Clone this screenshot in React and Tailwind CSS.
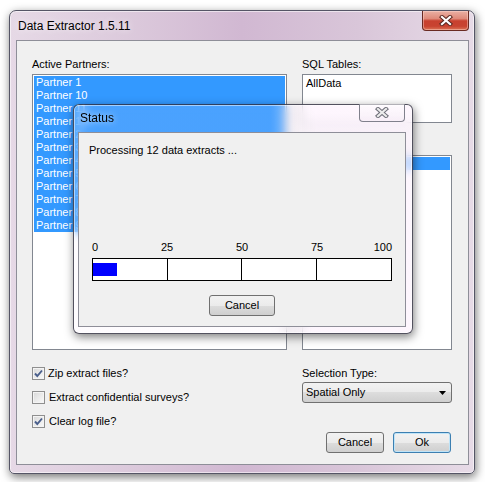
import React from "react";

const CloseGlyph = ({ fill, outline }) => (
  <svg width="14" height="11" viewBox="0 0 14 11">
    <path d="M3 2 L11 9 M11 2 L3 9" stroke={outline} strokeWidth="4.2" strokeLinecap="square" fill="none" />
    <path d="M3 2 L11 9 M11 2 L3 9" stroke={fill} strokeWidth="2.2" strokeLinecap="square" fill="none" />
  </svg>
);

const Check = ({ checked }) => (
  <div className="w-[13px] h-[13px] border border-[#8f8f8f] bg-[linear-gradient(135deg,#d8d8d8,#fbfbfb)] shadow-[inset_0_0_0_1px_#f4f4f4] flex items-center justify-center shrink-0">
    {checked && (
      <svg width="11" height="11" viewBox="0 0 11 11">
        <path d="M2 5.5 L4.3 8 L9 2.5" stroke="#4a5f8c" strokeWidth="1.9" fill="none" />
      </svg>
    )}
  </div>
);

const btn =
  "h-[21px] rounded-[3px] border bg-[linear-gradient(#f2f2f2_0%,#ebebeb_50%,#dddddd_50%,#cfcfcf_100%)] text-[11px] text-black flex items-center justify-center";

const partners = [
  "Partner 1",
  "Partner 10",
  "Partner 11",
  "Partner 12",
  "Partner 2",
  "Partner 3",
  "Partner 4",
  "Partner 5",
  "Partner 6",
  "Partner 7",
  "Partner 8",
  "Partner 9",
];

export default function App() {
  return (
    <div className="w-[485px] h-[482px] bg-white relative overflow-hidden font-['Liberation_Sans',Arial,sans-serif] text-[11px] leading-[13px] text-black">
      <div className="pt-[10px] pl-[9px]">
        {/* Main window */}
        <div className="w-[466px] h-[464px] rounded-t-[7px] rounded-b-[5px] border border-[#555566] bg-[linear-gradient(90deg,#e6d9e6_0%,#dccadc_25%,#d1b8d2_50%,#d9c6d9_75%,#e7dbe7_100%)] shadow-[1px_3px_10px_rgba(0,0,0,0.55),inset_0_0_0_1px_rgba(255,255,255,0.55)] flex flex-col">
          {/* Title bar */}
          <div className="h-[29px] flex justify-between items-start pl-[8px] pr-[5px] shrink-0">
            <div className="mt-[8px] text-[12px] leading-[15px] text-black [text-shadow:0_0_6px_rgba(255,255,255,0.9)]">
              Data Extractor 1.5.11
            </div>
            <div className="w-[47px] h-[20px] rounded-b-[4px] border border-t-0 border-[#6a2a22] bg-[linear-gradient(#eab0a4_0%,#df8a7a_40%,#c8412f_52%,#c84330_80%,#dc7456_100%)] shadow-[inset_0_0_0_1px_rgba(255,220,210,0.45)] flex items-center justify-center">
              <CloseGlyph fill="#ffffff" outline="#5a2820" />
            </div>
          </div>
          {/* Client */}
          <div className="ml-[6px] mr-[5px] h-[425px] border border-[#8e8e98] bg-[#f0f0f0] flex pl-[15px] pr-[16px] pt-[17px]">
            {/* Left column */}
            <div className="w-[255px] flex flex-col">
              <div className="h-[13px] mb-[3px]">Active Partners:</div>
              <div className="h-[276px] border border-[#828790] bg-white p-[1px]">
                {partners.map((p) => (
                  <div key={p} className="h-[13px] bg-[#3399ff] text-white pl-[2px]">
                    {p}
                  </div>
                ))}
              </div>
              <div className="mt-[17px] flex flex-col gap-[11px]">
                <div className="flex items-center gap-[3px] h-[13px]">
                  <Check checked />
                  <span>Zip extract files?</span>
                </div>
                <div className="flex items-center gap-[4px] h-[13px]">
                  <Check />
                  <span>Extract confidential surveys?</span>
                </div>
                <div className="flex items-center gap-[4px] h-[13px]">
                  <Check checked />
                  <span>Clear log file?</span>
                </div>
              </div>
            </div>
            {/* Right column */}
            <div className="w-[150px] ml-[15px] flex flex-col">
              <div className="h-[13px] mb-[3px]">SQL Tables:</div>
              <div className="h-[49px] border border-[#828790] bg-white pt-[2px] pl-[3px]">AllData</div>
              <div className="h-[13px] mt-[16px] mb-[3px]">Fields:</div>
              <div className="h-[195px] border border-[#828790] bg-white p-[1px]">
                <div className="h-[13px] bg-[#3399ff] text-white pl-[2px]">All Fields</div>
              </div>
              <div className="h-[13px] mt-[17px] mb-[2px]">Selection Type:</div>
              <div className="h-[21px] rounded-[3px] border border-[#707070] bg-[linear-gradient(#f2f2f2_0%,#ebebeb_50%,#dddddd_50%,#cfcfcf_100%)] flex items-center justify-between pl-[3px] pr-[5px]">
                <span>Spatial Only</span>
                <svg width="7" height="4" viewBox="0 0 7 4">
                  <path d="M0 0 H7 L3.5 4 Z" fill="#000" />
                </svg>
              </div>
              <div className="mt-[29px] flex justify-end gap-[9px] pr-[1px]">
                <div className={`${btn} w-[58px] border-[#707070]`}>Cancel</div>
                <div className={`${btn} w-[58px] border-[#3c7fb1] shadow-[inset_0_0_0_1px_#bfe4f8]`}>Ok</div>
              </div>
            </div>
          </div>
        </div>
      </div>

      {/* Status dialog (overlay) */}
      <div className="absolute left-[73px] top-[104px] w-[340px] h-[230px] rounded-[6px] border border-[rgba(40,40,55,0.8)] bg-[linear-gradient(90deg,rgba(248,228,248,0.12)_0%,rgba(248,228,248,0.12)_58%,rgba(253,242,253,0.7)_72%,rgba(253,242,253,0.7)_100%)] backdrop-blur-[5px] shadow-[1px_3px_10px_rgba(0,0,0,0.5),inset_0_0_0_1px_rgba(255,255,255,0.5)] flex flex-col">
        <div className="h-[27px] flex justify-between items-start pl-[6px] pr-[7px] shrink-0">
          <div className="mt-[6px] text-[12px] leading-[15px] text-black [text-shadow:0_0_6px_rgba(255,255,255,0.8)]">
            Status
          </div>
          <div className="-mt-[1px] w-[46px] h-[18px] rounded-b-[4px] border border-t-0 border-[#80808c] bg-[linear-gradient(rgba(255,255,255,0.55),rgba(245,235,245,0.6))] flex items-center justify-center">
            <CloseGlyph fill="#ececec" outline="#6e6e78" />
          </div>
        </div>
        <div className="ml-[4px] w-[328px] h-[195px] border border-[#8e8e98] bg-[#f0f0f0] flex flex-col pt-[11px]">
          <div className="pl-[10px] h-[13px]">Processing 12 data extracts ...</div>
          <div className="ml-[13px] w-[300px] mt-[84px]">
            <div className="relative h-[13px] mb-[4px]">
              <span className="absolute left-0 top-0">0</span>
              <span className="absolute left-[75px] top-0 -translate-x-1/2">25</span>
              <span className="absolute left-[150px] top-0 -translate-x-1/2">50</span>
              <span className="absolute left-[225px] top-0 -translate-x-1/2">75</span>
              <span className="absolute right-0 top-0">100</span>
            </div>
            <div className="h-[23px] border border-black bg-white grid grid-cols-4">
              <div className="border-r border-black flex items-center">
                <div className="w-[24px] h-[13px] bg-[#0000ff]" />
              </div>
              <div className="border-r border-black" />
              <div className="border-r border-black" />
              <div />
            </div>
          </div>
          <div className="mt-[14px] flex justify-center">
            <div className={`${btn} w-[66px] border-[#707070]`}>Cancel</div>
          </div>
        </div>
      </div>
    </div>
  );
}
